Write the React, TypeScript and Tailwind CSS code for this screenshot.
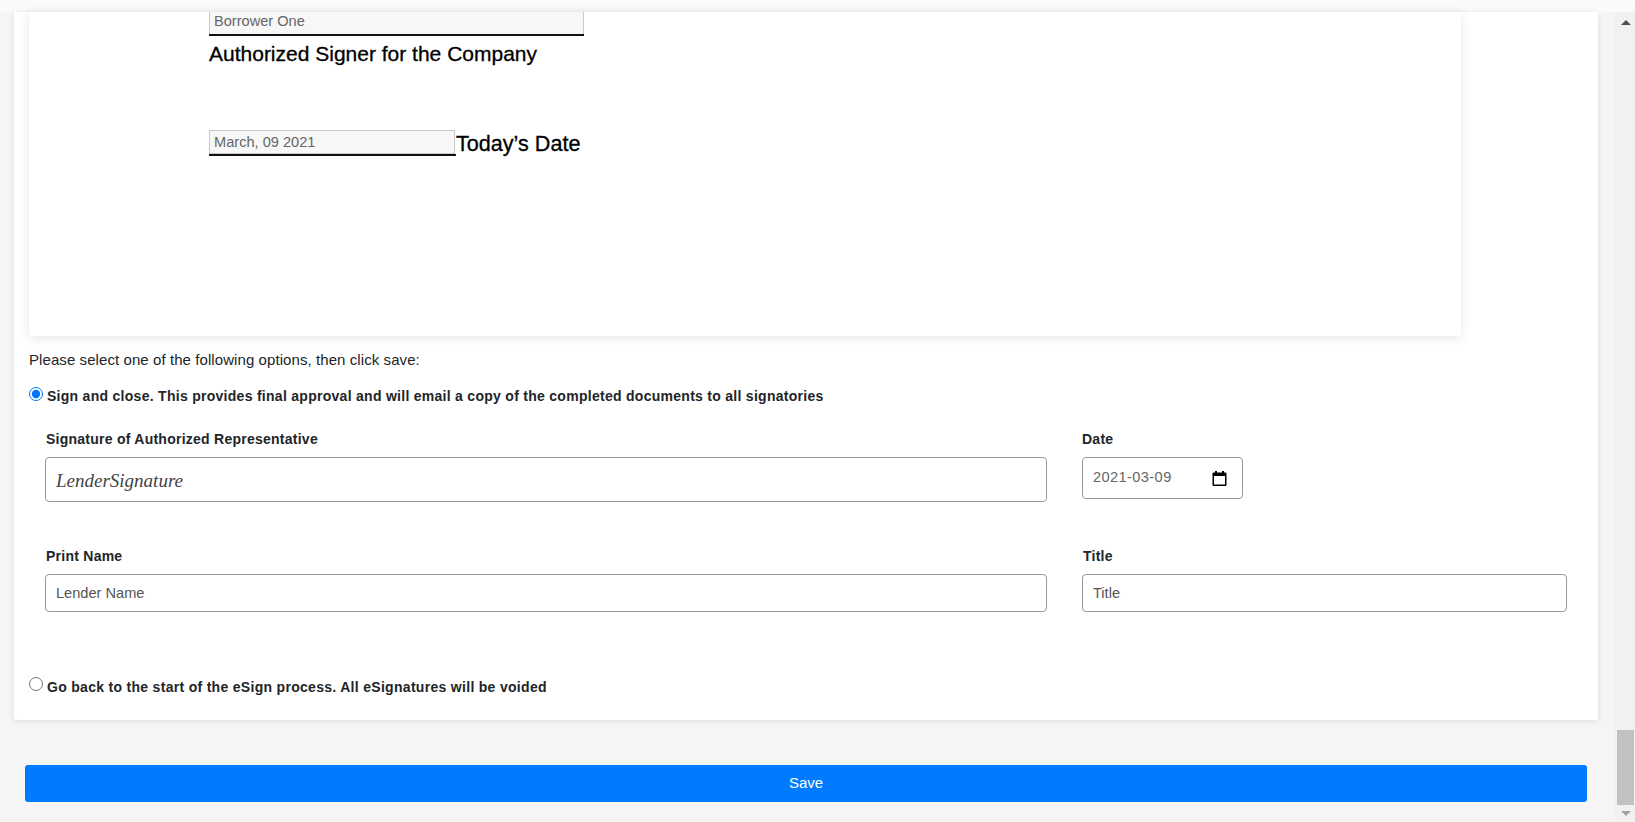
export default function App() {
  return (
    <div className="h-[822px] overflow-hidden bg-[#f5f5f5] font-['Liberation_Sans',Arial,sans-serif] text-[14.6px] text-[#212529]">
      {/* Top strip */}
      <div className="h-3 bg-[#fafafa]" />

      <div className="flex h-[810px]">
        <div className="w-[1615px] pl-[14px] pr-[17px]">
          {/* Main card */}
          <div className="h-[708px] rounded-b-[3px] bg-white pl-[15px] shadow-[0_1px_6px_rgba(0,0,0,0.1)]">
            {/* Document */}
            <div className="h-[324px] w-[1432px] pl-[180px] shadow-[0_2px_10px_rgba(0,0,0,0.1)]">
              <div className="w-[375px] border-b-2 border-[#111]">
                <input
                  defaultValue="Borrower One"
                  className="block h-[22px] w-full border-x border-[#c8c8c8] bg-[#f7f7f7] px-[4px] pb-[4px] text-[#666] outline-none"
                />
              </div>
              <div className="mt-[5px] text-[21px] leading-[26px] text-black [-webkit-text-stroke:0.3px_#000]">Authorized Signer for the Company</div>
              <div className="mt-[63px] flex items-end">
                <div className="w-[247px] border-b-2 border-[#111]">
                  <input
                    defaultValue="March, 09 2021"
                    className="block h-[24px] w-[246px] border border-[#c8c8c8] bg-[#f7f7f7] px-[4px] pb-[1px] text-[#666] outline-none"
                  />
                </div>
                <div className="text-[21.6px] leading-[24px] text-black [-webkit-text-stroke:0.3px_#000]">Today’s Date</div>
              </div>
            </div>

            {/* Options */}
            <p className="mt-[15px] text-[15px] leading-[17px] tracking-[0.08px]">Please select one of the following options, then click save:</p>
            <label className="mt-[19px] flex items-start gap-[4px] text-[14px] font-bold leading-[17px] tracking-[0.28px]">
              <input type="radio" name="choice" defaultChecked className="m-0 size-[14px] accent-[#0075ff]" />
              <span className="pt-[1px]">Sign and close. This provides final approval and will email a copy of the completed documents to all signatories</span>
            </label>

            <div className="ml-[16px] mt-[26px] flex gap-[35px]">
              <div className="w-[1002px]">
                <div className="ml-[1px] text-[14px] font-bold leading-[17px] tracking-[0.25px]">Signature of Authorized Representative</div>
                <input
                  defaultValue="LenderSignature"
                  className="mt-[9px] block h-[45px] w-full rounded-[4px] border border-[#999] px-[10px] pt-[2px] font-['Liberation_Serif',cursive] text-[19px] italic text-[#444] outline-none"
                />
              </div>
              <div>
                <div className="text-[14px] font-bold leading-[17px] tracking-[0.25px]">Date</div>
                <div className="mt-[9px] flex h-[42px] w-[161px] items-center rounded-[4px] border border-[#999] pl-[10px] pr-[15px]">
                  <input
                    defaultValue="2021-03-09"
                    className="w-full tracking-[0.4px] text-[#666] outline-none"
                  />
                  <svg viewBox="0 0 14 15" className="size-[15px] shrink-0">
                    <path d="M2.5 0h2v1.5h5V0h2v1.5H13A1 1 0 0 1 14 2.5V14a1 1 0 0 1-1 1H1a1 1 0 0 1-1-1V2.5a1 1 0 0 1 1-1h1.500z" fill="#000" />
                    <rect x="1.500" y="5" width="11" height="8.500" fill="#fff" />
                  </svg>
                </div>
              </div>
            </div>

            <div className="ml-[16px] mt-[46px] flex gap-[35px]">
              <div className="w-[1002px]">
                <div className="ml-[1px] text-[14px] font-bold leading-[17px] tracking-[0.25px]">Print Name</div>
                <input
                  defaultValue="Lender Name"
                  className="mt-[9px] block h-[38px] w-full rounded-[4px] border border-[#999] px-[10px] pb-[1px] text-[#555] outline-none"
                />
              </div>
              <div>
                <div className="ml-[1px] text-[14px] font-bold leading-[17px] tracking-[0.25px]">Title</div>
                <input
                  defaultValue="Title"
                  className="mt-[9px] block h-[38px] w-[485px] rounded-[4px] border border-[#999] px-[10px] pb-[1px] text-[#555] outline-none"
                />
              </div>
            </div>

            <label className="mt-[65px] flex items-start gap-[4px] text-[14px] font-bold leading-[17px] tracking-[0.3px]">
              <input type="radio" name="choice" className="m-0 size-[14px] accent-[#0075ff]" />
              <span className="pt-[2px]">Go back to the start of the eSign process. All eSignatures will be voided</span>
            </label>
          </div>

          {/* Save */}
          <div className="ml-[11px] mt-[45px]">
            <button className="h-[37px] w-[1562px] rounded-[3px] bg-[#007bff] text-[15px] text-white">Save</button>
          </div>
        </div>

        {/* Scrollbar */}
        <div className="flex w-[20px] flex-col items-center justify-between bg-[#f1f1f1] pb-[6px] pl-[1px] pt-[8px]">
          <div className="size-0 border-x-[5px] border-b-[5px] border-x-transparent border-b-[#505050]" />
          <div className="mt-auto w-[17px]">
            <div className="h-[75px] bg-[#c1c1c1]" />
            <div className="mx-auto mt-[6px] size-0 border-x-[5px] border-t-[5px] border-x-transparent border-t-[#a3a3a3]" />
          </div>
        </div>
      </div>
    </div>
  );
}
